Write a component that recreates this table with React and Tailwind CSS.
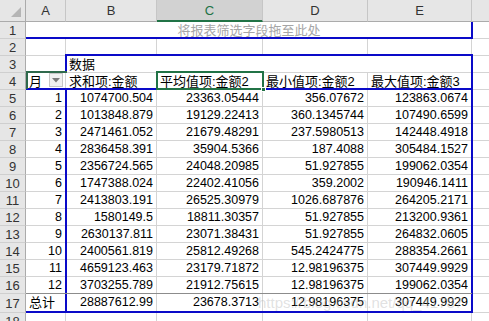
import React from "react";

const FONT = { fontFamily: '"Liberation Sans", "Noto Sans CJK SC", sans-serif' };

const B = ["1074700.504","1013848.879","2471461.052","2836458.391","2356724.565","1747388.024","2413803.191","1580149.5","2630137.811","2400561.819","4659123.463","3703255.789"];
const C = ["23363.05444","19129.22413","21679.48291","35904.5366","24048.20985","22402.41056","26525.30979","18811.30357","23071.38431","25812.49268","23179.71872","21912.75615"];
const D = ["356.07672","360.1345744","237.5980513","187.4088","51.927855","359.2002","1026.687876","51.927855","51.927855","545.2424775","12.98196375","12.98196375"];
const E = ["123863.0674","107490.6599","142448.4918","305484.1527","199062.0354","190946.1411","264205.2171","213200.9361","264832.0605","288354.2661","307449.9929","199062.0354"];

function RowHead({ n, h = "h-[17px]" }) {
  return (
    <div className={`w-[26px] ${h} shrink-0 bg-[#e6e6e6] border-r border-b border-r-[#ababab] border-b-[#cfcfcf] flex items-center justify-center text-[13px] text-[#333] leading-none`}>
      {n}
    </div>
  );
}

function Cell({ w, children, align = "right", cls = "", h = "h-[17px]" }) {
  return (
    <div
      className={`${w} ${h} shrink-0 border-r border-b border-[#d4d4d4] flex items-center px-[3px] text-[12.5px] text-black leading-none whitespace-nowrap overflow-hidden ${align === "right" ? "justify-end" : "justify-start"} ${cls}`}
    >
      {children}
    </div>
  );
}

function DataRow({ n, a, b, c, d, e, aAlign = "right" }) {
  return (
    <div className="flex">
      <RowHead n={n} />
      <Cell w="w-[40px]" align={aAlign}>{a}</Cell>
      <Cell w="w-[91px]">{b}</Cell>
      <Cell w="w-[106px]">{c}</Cell>
      <Cell w="w-[105px]">{d}</Cell>
      <Cell w="w-[104px]">{e}</Cell>
      <Cell w="w-[60px]" />
    </div>
  );
}

export default function App() {
  const blue = "bg-[#0a0ac8]";
  return (
    <div className="w-[489px] h-[321px] overflow-hidden bg-white relative" style={FONT}>
      {/* column header */}
      <div className="flex h-[22px]">
        <div className="w-[26px] h-[22px] shrink-0 bg-[#e6e6e6] border-r border-b border-[#ababab] relative">
          <svg width="12" height="12" viewBox="0 0 12 12" className="absolute right-[3px] bottom-[3px]">
            <polygon points="11,1 11,11 1,11" fill="#b5b5b5" />
          </svg>
        </div>
        {[["A", "w-[40px]"], ["B", "w-[91px]"]].map(([l, w]) => (
          <div key={l} className={`${w} h-[22px] shrink-0 bg-[#e6e6e6] border-r border-b border-r-[#c6c6c6] border-b-[#ababab] flex items-center justify-center text-[13px] text-[#333]`}>{l}</div>
        ))}
        <div className="w-[106px] h-[22px] shrink-0 bg-[#d2d2d2] border-r border-r-[#c6c6c6] border-b-2 border-b-[#217346] flex items-center justify-center text-[13px] text-[#217346] pt-[1px]">C</div>
        {[["D", "w-[105px]"], ["E", "w-[104px]"], ["", "w-[60px]"]].map(([l, w]) => (
          <div key={l + w} className={`${w} h-[22px] shrink-0 bg-[#e6e6e6] border-r border-b border-r-[#c6c6c6] border-b-[#ababab] flex items-center justify-center text-[13px] text-[#333]`}>{l}</div>
        ))}
      </div>

      {/* row 1 */}
      <div className="flex">
        <RowHead n={1} />
        <div className="w-[446px] h-[17px] shrink-0 border-b border-[#d4d4d4] flex items-center justify-center text-[13px] text-[#a6a6a6] leading-none">
          将报表筛选字段拖至此处
        </div>
        <Cell w="w-[60px]" />
      </div>

      {/* row 2 */}
      <DataRow n={2} />

      {/* row 3 */}
      <div className="flex">
        <RowHead n={3} />
        <Cell w="w-[40px]" />
        <div className="w-[406px] h-[17px] shrink-0 border-b border-[#d4d4d4] flex items-center px-[3px] text-[13px] leading-none">数据</div>
        <Cell w="w-[60px]" />
      </div>

      {/* row 4 */}
      <div className="flex">
        <RowHead n={4} />
        <Cell w="w-[40px]" align="left" cls="text-[13px]">月</Cell>
        <Cell w="w-[91px]" align="left" cls="text-[13px]">求和项:金额</Cell>
        <Cell w="w-[106px]" align="left" cls="text-[13px]">平均值项:金额2</Cell>
        <Cell w="w-[105px]" align="left" cls="text-[13px]">最小值项:金额2</Cell>
        <Cell w="w-[104px]" align="left" cls="text-[13px]">最大值项:金额3</Cell>
        <Cell w="w-[60px]" />
      </div>

      {B.map((v, i) => (
        <DataRow key={i} n={i + 5} a={i + 1} b={v} c={C[i]} d={D[i]} e={E[i]} />
      ))}

      <div className="flex">
        <RowHead n={17} h="h-[19px]" />
        <Cell w="w-[40px]" align="left" cls="text-[13px] pb-[2px]" h="h-[19px]">总计</Cell>
        <Cell w="w-[91px]" cls="pb-[2px]" h="h-[19px]">28887612.99</Cell>
        <Cell w="w-[106px]" cls="pb-[2px]" h="h-[19px]">23678.3713</Cell>
        <Cell w="w-[105px]" cls="pb-[2px]" h="h-[19px]">12.98196375</Cell>
        <Cell w="w-[104px]" cls="pb-[2px]" h="h-[19px]">307449.9929</Cell>
        <Cell w="w-[60px]" h="h-[19px]" />
      </div>
      <DataRow n={18} />

      {/* overlays: pivot outlines */}
      <div className={`absolute left-[26px] top-[37px] w-[447px] h-[2px] ${blue}`} />
      <div className={`absolute left-[471px] top-[22px] w-[2px] h-[17px] ${blue}`} />

      <div className={`absolute left-[65px] top-[54px] w-[408px] h-[2px] ${blue}`} />
      <div className={`absolute left-[65px] top-[54px] w-[2px] h-[19px] ${blue}`} />
      <div className={`absolute left-[471px] top-[54px] w-[2px] h-[259px] ${blue}`} />
      <div className={`absolute left-[26px] top-[88px] w-[447px] h-[2px] ${blue}`} />
      <div className={`absolute left-[65px] top-[88px] w-[2px] h-[225px] ${blue}`} />
      <div className={`absolute left-[26px] top-[311px] w-[447px] h-[2px] ${blue}`} />
      <div className="absolute left-[26px] top-[293px] w-[446px] h-[1px] bg-[#8c8c8c]" />

      {/* A4 field box */}
      <div className="absolute left-[26px] top-[71px] w-[41px] h-[2px] bg-[#2f6a4c]" />
      <div className="absolute left-[26px] top-[71px] w-[2px] h-[18px] bg-[#2f6a4c]" />
      {/* dropdown button */}
      <div className="absolute left-[49px] top-[73px] w-[14px] h-[14px] bg-[#f0f0f0] border border-[#c6c6c6] flex items-center justify-center">
        <svg width="8" height="5" viewBox="0 0 8 5">
          <polygon points="0,0 8,0 4,4.5" fill="#7a7a7a" />
        </svg>
      </div>

      {/* selection C4 */}
      <div className="absolute left-[156px] top-[71px] w-[108px] h-[19px] border-2 border-[#217346]" />
      <div className="absolute left-[261px] top-[87px] w-[5px] h-[5px] bg-[#217346] border border-white" />

      {/* watermark */}
      <div className="absolute left-[258px] top-[294px] text-[15px] leading-[18px] text-[#b4b4b4]/40 whitespace-nowrap">
        https://blog.csdn.net/qq_41787
      </div>
    </div>
  );
}
